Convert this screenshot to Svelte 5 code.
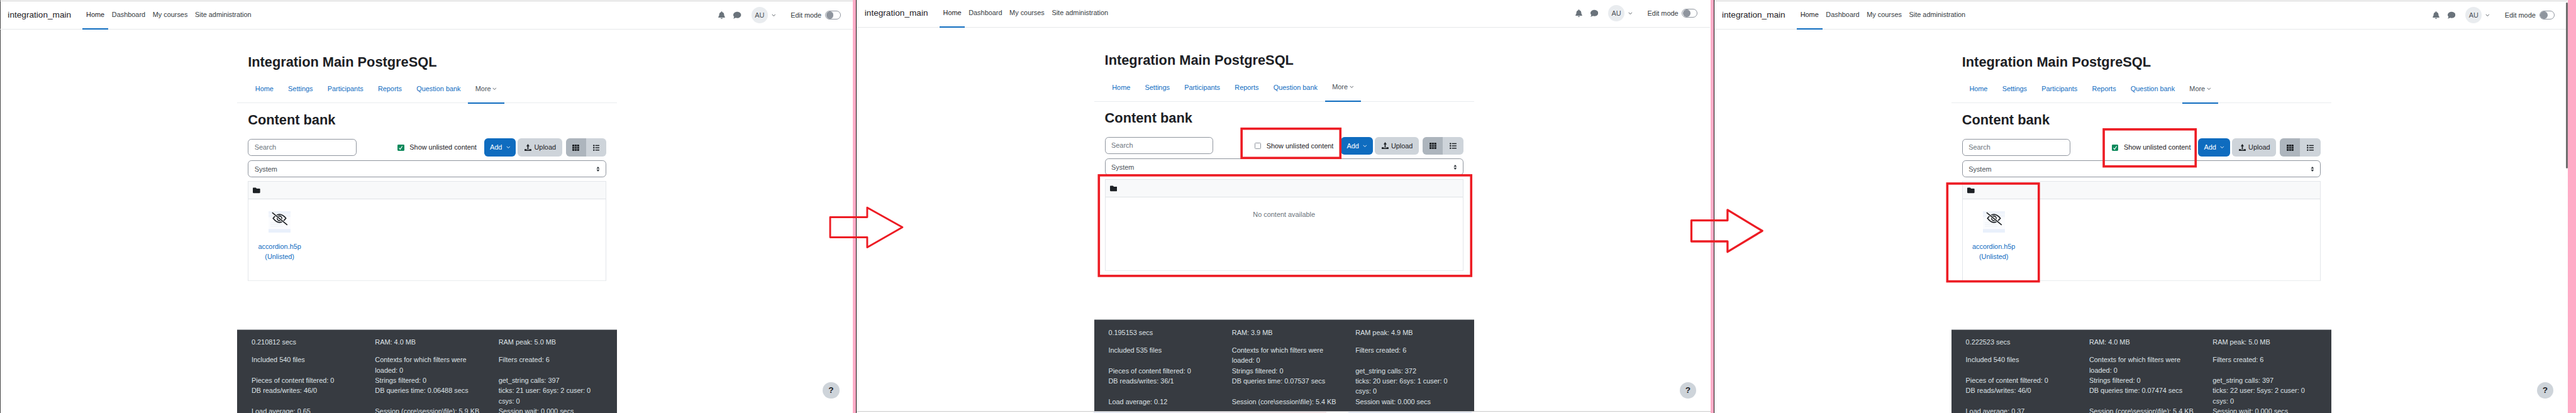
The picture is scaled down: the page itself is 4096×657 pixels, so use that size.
<script>
  const panels = [
    {
      cls: 'first', checked: true, empty: false,
      secs: '0.210812', ram: '4.0', peak: '5.0', files: 540, strings: 397, rw: '46/0',
      dbtime: '0.06488', ticks: 'ticks: 21 user: 6sys: 2 cuser: 0 csys: 0', load: '0.65', sess: '5.9'
    },
    {
      cls: 'second', checked: false, empty: true,
      secs: '0.195153', ram: '3.9', peak: '4.9', files: 535, strings: 372, rw: '36/1',
      dbtime: '0.07537', ticks: 'ticks: 20 user: 6sys: 1 cuser: 0 csys: 0', load: '0.12', sess: '5.4'
    },
    {
      cls: 'third', checked: true, empty: false,
      secs: '0.222523', ram: '4.0', peak: '5.0', files: 540, strings: 397, rw: '46/0',
      dbtime: '0.07474', ticks: 'ticks: 22 user: 5sys: 2 cuser: 0 csys: 0', load: '0.37', sess: '5.4'
    }
  ];

  const mainNav = ['Home', 'Dashboard', 'My courses', 'Site administration'];
  const tabs = ['Home', 'Settings', 'Participants', 'Reports', 'Question bank'];

  function perfRows(p) {
    return [
      `${p.secs} secs`, `RAM: ${p.ram} MB`, `RAM peak: ${p.peak} MB`,
      `Included ${p.files} files`, 'Contexts for which filters were loaded: 0', 'Filters created: 6',
      'Pieces of content filtered: 0', 'Strings filtered: 0', `get_string calls: ${p.strings}`,
      `DB reads/writes: ${p.rw}`, `DB queries time: ${p.dbtime} secs`, p.ticks,
      `Load average: ${p.load}`, `Session (core\\session\\file): ${p.sess} KB`, 'Session wait: 0.000 secs'
    ];
  }
</script>

{#snippet chevron(color)}
  <svg class="chev" viewBox="0 0 10 6" width="9" height="6">
    <path d="M1 1l4 4 4-4" fill="none" stroke={color} stroke-width="1.4" />
  </svg>
{/snippet}

{#snippet panel(p)}
  <section class="panel {p.cls}">
    <div class="inner">
      <header class="navbar">
        <span class="brand">integration_main</span>
        <nav class="mainnav">
          {#each mainNav as item, i}
            <span class="navitem" class:active={i === 0}>{item}</span>
          {/each}
        </nav>
        <div class="usernav">
          <svg class="bell" viewBox="0 0 448 512" width="15" height="17">
            <path d="M224 512c35.32 0 63.97-28.65 63.97-64H160.03c0 35.35 28.65 64 63.97 64zm215.39-149.71c-19.32-20.76-55.47-51.99-55.47-154.29 0-77.7-54.48-139.9-127.94-155.16V32c0-17.67-14.32-32-31.98-32s-31.98 14.33-31.98 32v20.84C118.56 68.1 64.08 130.3 64.08 208c0 102.3-36.15 133.53-55.47 154.29-6 6.45-8.66 14.16-8.61 21.71.11 16.4 12.98 32 32.1 32h383.8c19.12 0 32-15.6 32.1-32 .05-7.55-2.61-15.27-8.61-21.71z" />
          </svg>
          <svg class="bubble" viewBox="0 0 512 512" width="17" height="17">
            <path d="M256 32C114.6 32 0 125.1 0 240c0 49.6 21.4 95 57 130.7C44.5 421.1 2.7 466 2.2 466.5c-2.2 2.3-2.8 5.7-1.5 8.7S4.8 480 8 480c66.3 0 116-31.8 140.6-51.4 32.7 12.3 69 19.4 107.4 19.4 141.4 0 256-93.1 256-208S397.4 32 256 32z" />
          </svg>
          <span class="avatar">AU</span>
          {@render chevron('#495057')}
          <span class="editmode">Edit mode</span>
          <span class="switch"><span class="knob"></span></span>
        </div>
      </header>

      <main class="page">
        <h1>Integration Main PostgreSQL</h1>
        <nav class="tabs">
          {#each tabs as tab}
            <span class="tab">{tab}</span>
          {/each}
          <span class="tab more">More {@render chevron('#495057')}</span>
        </nav>

        <div class="region">
          <h2>Content bank</h2>
          <div class="toolbar">
            <span class="search">Search</span>
            <label class="unlisted">
              <span class="check" class:on={p.checked}>
                {#if p.checked}
                  <svg viewBox="0 0 14 14" width="14" height="14"><path d="M3.5 7.5l2.5 3 4.5-7" fill="none" stroke="#fff" stroke-width="1.6" /></svg>
                {/if}
              </span>
              Show unlisted content
            </label>
            <span class="btn add">Add {@render chevron('#ffffff')}</span>
            <span class="btn upload">
              <svg viewBox="0 0 15 16" width="15" height="16">
                <path d="M7.500 0L11 5H8.700v7H6.300V5H4z M0 11.500h4.600v1.600h5.800v-1.600H15V16H0z" fill="#1d2125" />
              </svg>
              Upload
            </span>
            <div class="views">
              <span class="view current">
                <svg viewBox="0 0 15 14" width="15" height="14">
                  <rect width="15" height="14" rx="1.5" fill="#1d2125" />
                  <path d="M5 0v14M10 0v14M0 4.700h15M0 9.300h15" stroke="#adb5bd" stroke-width="1" />
                </svg>
              </span>
              <span class="view">
                <svg viewBox="0 0 15 14" width="15" height="14" fill="#1d2125">
                  <circle cx="1.7" cy="2" r="1.7" /><circle cx="1.7" cy="7" r="1.7" /><circle cx="1.7" cy="12" r="1.7" />
                  <rect x="5" y="1" width="10" height="2" /><rect x="5" y="6" width="10" height="2" /><rect x="5" y="11" width="10" height="2" />
                </svg>
              </span>
            </div>
          </div>

          <div class="select">
            System
            <svg viewBox="0 0 8 11" width="8" height="11" fill="#343a40"><path d="M4 0l3.500 4.500h-7zM4 11L.5 6.500h7z" /></svg>
          </div>

          <div class="bank" class:short={p.empty}>
            <div class="bankhead">
              <svg viewBox="0 0 512 512" width="16" height="16" fill="#1d2125">
                <path d="M464 128H272l-64-64H48C21.49 64 0 85.49 0 112v288c0 26.51 21.49 48 48 48h416c26.51 0 48-21.49 48-48V176c0-26.51-21.49-48-48-48z" />
              </svg>
            </div>
            {#if p.empty}
              <p class="nocontent">No content available</p>
            {:else}
              <div class="item">
                <svg class="thumb" viewBox="0 0 48 47" width="48" height="47">
                  <rect width="48" height="47" fill="#fbfcfe" />
                  <rect width="48" height="6" fill="#eef3fb" />
                  <rect y="7" width="48" height="6" fill="#f1f5fb" />
                  <rect y="39" width="48" height="8" fill="#e9f0fb" />
                  <path d="M4 25h30M4 29h26M4 33h28" stroke="#eef1f5" stroke-width="1.5" />
                  <path d="M10 15.500C15 9 19.500 7 24 7s9 2 14 8.500C33 22 28.500 24.500 24 24.500S15 22 10 15.500z" fill="none" stroke="#1d2125" stroke-width="2.4" />
                  <circle cx="24" cy="15.500" r="5" fill="none" stroke="#1d2125" stroke-width="2.2" />
                  <path d="M8 3l33 27" stroke="#fff" stroke-width="4.5" />
                  <path d="M8 3l33 27" stroke="#1d2125" stroke-width="2.4" />
                </svg>
                <span class="itemname">accordion.h5p<br />(Unlisted)</span>
              </div>
            {/if}
          </div>
        </div>

        <footer class="perf">
          {#each perfRows(p) as row}
            <div class="perfcell">{row}</div>
          {/each}
        </footer>
      </main>
    </div>
    <span class="help">?</span>
    {#if p.cls === 'second'}<div class="bottomstrip"></div>{/if}
    {#if p.cls === 'third'}<div class="scrollbar"></div>{/if}
  </section>
{/snippet}

<div class="stage">
  {#each panels as p, i}
    {@render panel(p)}
    <div class="gutter" class:last={i === panels.length - 1}></div>
  {/each}

  <svg class="marks" viewBox="0 0 5632 904" width="5632" height="904" fill="none" stroke="#ed1c24">
    <path stroke-width="4" stroke-linejoin="round" d="M1815 475H1896V454L1973 497 1896 541V519H1815Z" />
    <path stroke-width="4.500" stroke-linejoin="round" d="M3698 482H3777V459L3853 505 3777 551V528H3698Z" />
    <rect stroke-width="5" x="2714.500" y="281.500" width="216" height="64" />
    <rect stroke-width="5" x="2402.500" y="383.500" width="814" height="220" />
    <rect stroke-width="5" x="4257.500" y="401.500" width="200" height="214" />
    <rect stroke-width="5" x="4599.500" y="283" width="201" height="81" />
  </svg>
</div>

<style>
  :global(body) { margin: 0; background: #fff; overflow: hidden; }

  .stage {
    zoom: 0.72727;
    position: relative;
    display: flex;
    width: 5632px;
    height: 904px;
    overflow: hidden;
    background: #fff;
    font-family: "Liberation Sans", Arial, sans-serif;
    font-size: 15px;
    line-height: 22.5px;
    color: #1d2125;
  }

  .panel { position: relative; height: 904px; overflow: hidden; flex: none; }
  .first { width: 1865px; box-shadow: inset 1px 0 0 #000; }
  .second { width: 1866px; }
  .third { width: 1867px; }
  .inner { width: 1865px; padding-top: 1px; }
  .second .inner { margin-top: -4px; }

  .gutter {
    flex: none;
    width: 7px;
    background: #ffacc7;
    border-right: 1px solid #111;
  }
  .gutter.last { flex: 1; border-right: 0; }

  .navbar {
    display: flex;
    align-items: stretch;
    height: 61px;
    padding-left: 17px;
    border-top: 1px solid #cfcfcf;
    border-bottom: 1px solid #e6e8ea;
  }
  .brand { align-self: center; font-size: 18.75px; margin-right: 25px; }
  .mainnav { display: flex; }
  .navitem {
    display: flex;
    align-items: center;
    padding: 0 8px;
    border-bottom: 3px solid transparent;
    margin-bottom: -1px;
    color: #343a40;
  }
  .navitem.active { border-color: #0f6cbf; color: #1d2125; }

  .usernav { display: flex; align-items: center; margin-left: auto; padding-right: 27px; }
  .bell, .bubble { fill: #6a737b; }
  .bubble { margin-left: 18px; }
  .avatar {
    display: flex;
    align-items: center;
    justify-content: center;
    width: 36px;
    height: 36px;
    margin-left: 22px;
    border-radius: 50%;
    background: #e9ecef;
    color: #495057;
  }
  .usernav .chev { margin-left: 8px; }
  .editmode { margin-left: 33px; color: #343a40; }
  .switch {
    display: flex;
    align-items: center;
    box-sizing: border-box;
    width: 34px;
    height: 20px;
    margin-left: 8px;
    padding: 1px;
    border: 1px solid #8f959e;
    border-radius: 10px;
    background: #fff;
  }
  .knob { width: 16px; height: 16px; border-radius: 50%; background: #8f959e; }

  .page { width: 830px; margin-left: 519px; padding-top: 54px; }
  h1, h2 { margin: 0; font-size: 30px; line-height: 36px; font-weight: 700; }
  h1 { padding-left: 23px; }

  .tabs {
    display: flex;
    height: 60px;
    margin-top: 10px;
    padding-left: 23px;
    border-bottom: 2px solid #e9ecef;
  }
  .tab {
    display: flex;
    align-items: center;
    gap: 4px;
    padding: 0 16px;
    color: #0f6cbf;
  }
  .tab.more { color: #495057; border-bottom: 3px solid #0f6cbf; margin-bottom: -2px; }

  .region { padding: 18px 23px 0; }

  .toolbar { display: flex; align-items: center; height: 39px; margin-top: 23px; }
  .search {
    display: flex;
    align-items: center;
    box-sizing: border-box;
    width: 237px;
    height: 37px;
    padding-left: 13px;
    border: 1px solid #8f959e;
    border-radius: 8px;
    color: #6a737b;
  }
  .unlisted { display: flex; align-items: center; gap: 12px; margin: 0 16px 0 auto; }
  .check {
    box-sizing: border-box;
    width: 14px;
    height: 14px;
    border: 1.5px solid #8f959e;
    border-radius: 2px;
    background: #fff;
  }
  .check.on { border: 0; background: #0d8a5c; }
  .check svg { display: block; }

  .btn {
    display: flex;
    align-items: center;
    box-sizing: border-box;
    height: 39px;
    border-radius: 8px;
  }
  .add { width: 70px; padding-left: 13px; gap: 9px; background: #0f6cbf; color: #fff; }
  .upload { width: 97px; margin-left: 4px; padding-left: 15px; gap: 6px; background: #ced4da; }
  .views { display: flex; margin-left: 8px; }
  .view {
    display: flex;
    align-items: center;
    justify-content: center;
    width: 45px;
    height: 39px;
    background: #ced4da;
    border-radius: 0 8px 8px 0;
  }
  .view.current { width: 44px; background: #adb5bd; border-radius: 8px 0 0 8px; }

  .select {
    display: flex;
    align-items: center;
    justify-content: space-between;
    box-sizing: border-box;
    height: 37px;
    margin-top: 9px;
    padding: 0 13px;
    border: 1px solid #8f959e;
    border-radius: 8px;
    color: #495057;
  }

  .bank {
    box-sizing: border-box;
    height: 218px;
    margin-top: 8px;
    border: 1px solid #e3e6ea;
    border-top-width: 2px;
    border-bottom-width: 2px;
    border-bottom-color: #e9ecef;
  }
  .bank.short { height: 200px; }
  .bankhead {
    display: flex;
    align-items: center;
    box-sizing: border-box;
    height: 39px;
    padding-left: 10px;
    background: #f8f9fa;
    border-bottom: 1px solid #dee2e6;
  }
  .nocontent { margin: 25px 0 0; text-align: center; color: #6a737b; }
  .item {
    display: flex;
    flex-direction: column;
    align-items: center;
    width: 136px;
    padding-top: 26px;
  }
  .thumb { display: block; }
  .itemname { margin-top: 18px; text-align: center; color: #0f6cbf; }

  .perf {
    display: grid;
    grid-template-columns: repeat(3, 270px);
    align-content: start;
    height: 400px;
    margin-top: 106px;
    padding: 16px 0 0 31px;
    background: #373b41;
    border-top: 2px solid #9a9da1;
    color: #dee2e6;
  }
  .perfcell { padding-right: 35px; }
  .perfcell:nth-child(-n + 3) { padding-bottom: 16px; }
  .second .perf { margin-top: 107px; }

  .help {
    position: absolute;
    left: 1799px;
    top: 836px;
    display: flex;
    align-items: center;
    justify-content: center;
    width: 36px;
    height: 36px;
    border-radius: 50%;
    background: #ced4da;
    font-size: 18.75px;
    font-weight: 700;
  }

  .bottomstrip {
    position: absolute;
    left: 0;
    right: 0;
    bottom: 0;
    height: 3px;
    background: linear-gradient(90deg, #fff 0 518px, #e3e8f2 518px, #efe3e6 1027px, #fafafa 1027px 1075px, #e3e8f2 1075px 1345px, #fff 1345px);
    border-top: 1px solid #c9c9c9;
  }
  .scrollbar {
    position: absolute;
    left: 1863px;
    top: 5px;
    width: 3px;
    height: 364px;
    border-radius: 2px;
    background: #6f6f6f;
  }

  .marks { position: absolute; left: 0; top: 0; pointer-events: none; }
</style>
